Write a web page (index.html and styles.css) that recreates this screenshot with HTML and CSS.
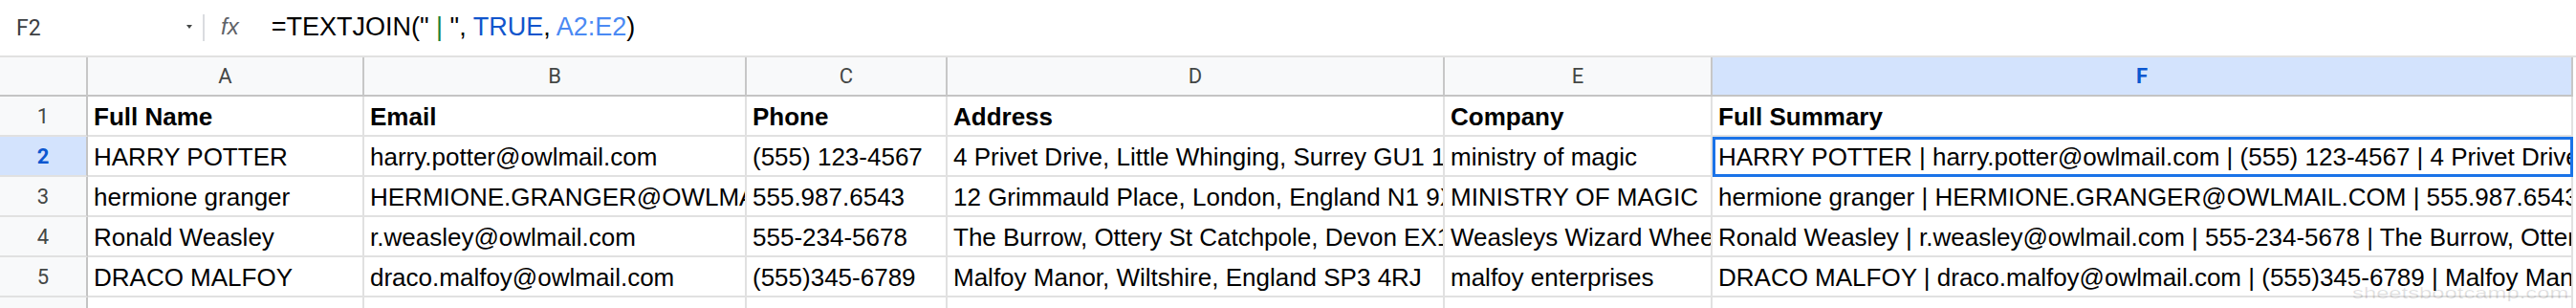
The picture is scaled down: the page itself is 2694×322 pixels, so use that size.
FILE: index.html
```html
<!DOCTYPE html>
<html lang="en">
<head>
  <meta charset="UTF-8">
  <meta name="viewport" content="width=device-width, initial-scale=1">
  <title>TEXTJOIN - Sheet</title>
  <link rel="stylesheet" href="styles.css">
</head>
<body>
  <!-- Formula bar -->
  <div class="formula-bar">
    <div class="name-box">
      <span class="cell-ref">F2</span>
      <span class="caret"></span>
    </div>
    <div class="divider"></div>
    <div class="fx">fx</div>
    <div class="formula">=TEXTJOIN("<span class="str"> | </span>", <span class="bool">TRUE</span>, <span class="range">A2:E2</span>)</div>
  </div>

  <!-- Grid -->
  <div class="sheet">
    <div class="corner"></div>
    <div class="col-head">A</div>
    <div class="col-head">B</div>
    <div class="col-head">C</div>
    <div class="col-head">D</div>
    <div class="col-head">E</div>
    <div class="col-head selected">F</div>

    <div class="row-head">1</div>
    <div class="cell bold">Full Name</div>
    <div class="cell bold">Email</div>
    <div class="cell bold">Phone</div>
    <div class="cell bold">Address</div>
    <div class="cell bold">Company</div>
    <div class="cell bold">Full Summary</div>

    <div class="row-head selected">2</div>
    <div class="cell">HARRY POTTER</div>
    <div class="cell">harry.potter@owlmail.com</div>
    <div class="cell">(555) 123-4567</div>
    <div class="cell">4 Privet Drive, Little Whinging, Surrey GU1 1AA</div>
    <div class="cell">ministry of magic</div>
    <div class="cell active">HARRY POTTER | harry.potter@owlmail.com | (555) 123-4567 | 4 Privet Drive, Little Whinging, Surrey GU1 1AA | ministry of magic</div>

    <div class="row-head">3</div>
    <div class="cell">hermione granger</div>
    <div class="cell">HERMIONE.GRANGER@OWLMAIL.COM</div>
    <div class="cell">555.987.6543</div>
    <div class="cell">12 Grimmauld Place, London, England N1 9XX</div>
    <div class="cell">MINISTRY OF MAGIC</div>
    <div class="cell">hermione granger | HERMIONE.GRANGER@OWLMAIL.COM | 555.987.6543 | 12 Grimmauld Place, London, England N1 9XX</div>

    <div class="row-head">4</div>
    <div class="cell">Ronald Weasley</div>
    <div class="cell">r.weasley@owlmail.com</div>
    <div class="cell">555-234-5678</div>
    <div class="cell">The Burrow, Ottery St Catchpole, Devon EX11 1AA</div>
    <div class="cell">Weasleys Wizard Wheezes</div>
    <div class="cell">Ronald Weasley | r.weasley@owlmail.com | 555-234-5678 | The Burrow, Ottery St Catchpole, Devon EX11 1AA</div>

    <div class="row-head">5</div>
    <div class="cell">DRACO MALFOY</div>
    <div class="cell">draco.malfoy@owlmail.com</div>
    <div class="cell">(555)345-6789</div>
    <div class="cell">Malfoy Manor, Wiltshire, England SP3 4RJ</div>
    <div class="cell">malfoy enterprises</div>
    <div class="cell">DRACO MALFOY | draco.malfoy@owlmail.com | (555)345-6789 | Malfoy Manor, Wiltshire, England SP3 4RJ</div>

    <div class="row-head"></div>
    <div class="cell"></div>
    <div class="cell"></div>
    <div class="cell"></div>
    <div class="cell"></div>
    <div class="cell"></div>
    <div class="cell"></div>
  </div>

  <div class="watermark">sheetsbootcamp.com</div>
</body>
</html>
```

FILE: styles.css
```css
/* Page */
html, body {
  margin: 0;
  background: #ffffff;
}
body {
  width: 2694px;
  height: 322px;
  overflow: hidden;
  position: relative;
  font-family: "Liberation Sans", Arial, sans-serif;
  color: #000000;
}

/* Formula bar */
.formula-bar {
  display: flex;
  align-items: center;
  height: 58px;
}
.name-box {
  display: flex;
  align-items: center;
  justify-content: space-between;
  width: 212px;
  box-sizing: border-box;
  padding: 0 11px 0 17px;
}
.cell-ref {
  font-family: Roboto, "Liberation Sans", sans-serif;
  font-size: 23px;
  color: #3c4043;
}
.caret {
  width: 0;
  height: 0;
  border-left: 3px solid transparent;
  border-right: 3px solid transparent;
  border-top: 4px solid #444746;
  margin-top: -3px;
}
.divider {
  width: 2px;
  height: 28px;
  background: #dadce0;
}
.fx {
  margin-left: 17px;
  font-size: 24px;
  font-style: italic;
  color: #5f6368;
  margin-top: -2px;
}
.formula {
  margin-left: 34px;
  font-size: 27px;
  white-space: pre;
  margin-top: -2px;
}
.formula .str { color: #188038; }
.formula .bool { color: #1155cc; }
.formula .range { color: #4a89f3; }

/* Sheet grid */
.sheet {
  display: grid;
  grid-template-columns: 92px 289px 400px 210px 520px 280px 900px;
  grid-template-rows: 41px repeat(5, 42px) 20px;
  border-top: 2px solid #e1e1e1;
}
.corner,
.col-head {
  background: #f8f9fa;
  border-right: 2px solid #c7c7c7;
  border-bottom: 2px solid #c4c4c4;
}
.col-head {
  display: flex;
  align-items: center;
  justify-content: center;
  font-family: Roboto, "Liberation Sans", sans-serif;
  font-size: 22px;
  line-height: 22px;
  color: #444746;
}
.row-head {
  display: flex;
  align-items: flex-end;
  justify-content: center;
  padding-bottom: 8px;
  background: #f8f9fa;
  border-right: 2px solid #c4c4c4;
  border-bottom: 2px solid #e1e1e1;
  font-family: Roboto, "Liberation Sans", sans-serif;
  font-size: 22px;
  line-height: 22px;
  color: #444746;
}
.col-head.selected,
.row-head.selected {
  background: #d3e3fd;
  color: #0b57d0;
  font-weight: bold;
}
.cell {
  display: flex;
  align-items: flex-end;
  padding: 0 0 6px 6px;
  overflow: hidden;
  white-space: nowrap;
  border-right: 2px solid #e1e1e1;
  border-bottom: 2px solid #e1e1e1;
  font-size: 26px;
  line-height: 26px;
}
.cell.bold {
  font-weight: bold;
}
.cell.active {
  outline: 3px solid #1a73e8;
  outline-offset: -3px;
}

/* Watermark over the bottom right corner */
.watermark {
  position: absolute;
  left: 2460px;
  top: 298px;
  font-size: 17px;
  line-height: 17px;
  color: rgba(0, 0, 0, 0.12);
  transform: scaleX(1.4);
  transform-origin: left top;
  white-space: nowrap;
  pointer-events: none;
}
```
